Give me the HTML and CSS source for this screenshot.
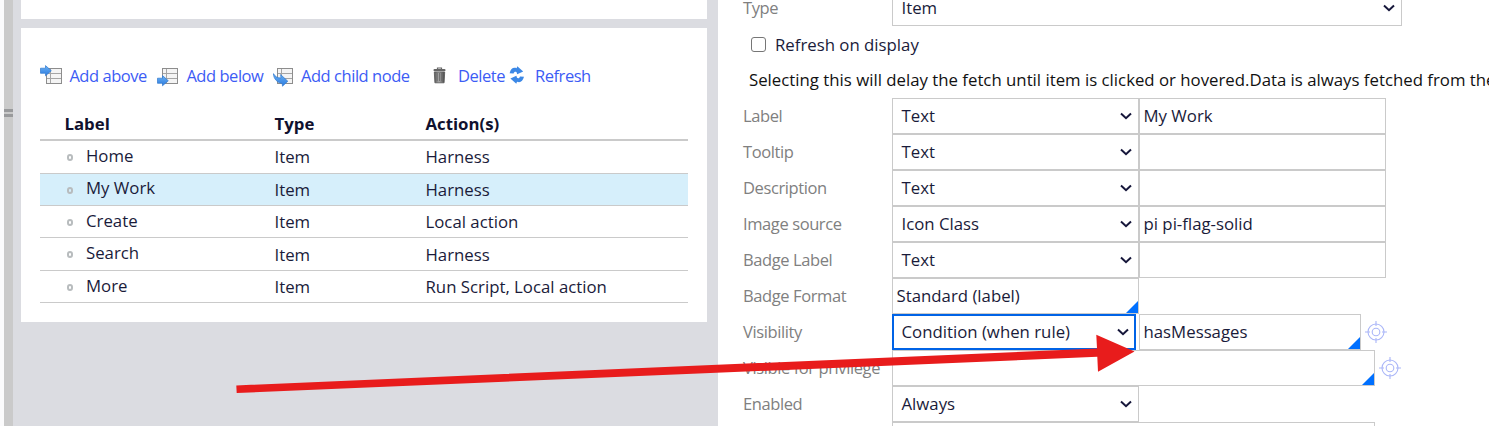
FILE: index.html
```
<!DOCTYPE html>
<html lang="en">
<head>
    <meta charset="UTF-8">
    <meta name="viewport" content="width=device-width, initial-scale=1.0">
    <title>Navigation rule</title>
    <link rel="stylesheet" href="styles.css">
</head>
<body>
    <!-- shared icon shapes -->
    <svg class="defs" width="0" height="0">
        <defs>
            <linearGradient id="blue" x1="0" y1="0" x2="0" y2="1">
                <stop offset="0" stop-color="#6ab2f4"/>
                <stop offset="1" stop-color="#2d7be0"/>
            </linearGradient>
            <linearGradient id="metal" x1="0" y1="0" x2="1" y2="0">
                <stop offset="0" stop-color="#555"/>
                <stop offset=".45" stop-color="#aaa"/>
                <stop offset="1" stop-color="#444"/>
            </linearGradient>
            <g id="grid">
                <rect x="0.5" y="0.5" width="15" height="15" fill="#f4f4f4" stroke="#8d8d8d"/>
                <path d="M1 5.5h14M1 10.5h14M4.5 1v14" fill="none" stroke="#a5a5a5"/>
            </g>
            <path id="arrow" d="M0.5 3.2h5V0.6L11.3 5.7 5.5 10.8V8.3h-5z" fill="url(#blue)" stroke="#2f78cf" stroke-width=".7"/>
            <path id="chevron" d="M1 1.5l5 4.7 5-4.7" fill="none" stroke="#15163a" stroke-width="2"/>
            <g id="target" fill="none" stroke="#aab6f8" stroke-width="1.1">
                <circle cx="11" cy="11" r="8"/>
                <circle cx="11" cy="11" r="3.8"/>
                <path d="M11 0v5M11 17v5M0 11h5M17 11h5"/>
            </g>
        </defs>
    </svg>

    <div class="page">
        <div class="splitter"><span class="grip"></span></div>

        <div class="left">
            <div class="panel panel-top"></div>
            <div class="panel panel-tree">
                <div class="toolbar">
                    <a class="tool above"><svg width="23" height="22"><use href="#grid" x="6" y="3"/><use href="#arrow" x="0" y="0"/></svg>Add above</a>
                    <a class="tool below"><svg width="23" height="22"><use href="#grid" x="5" y="3"/><use href="#arrow" x="0" y="10"/></svg>Add below</a>
                    <a class="tool child"><svg width="23" height="22"><use href="#grid" x="4" y="3"/><path d="M0.4 8.6C2 11.5 4.5 13.2 8 13l-.4-3.4 7.2 6.6-5.3 5-.3-2.7C4.5 18 .6 14 .4 8.6z" fill="url(#blue)" stroke="#2f78cf" stroke-width=".7"/></svg>Add child node</a>
                    <a class="tool delete"><svg width="14" height="22"><path d="M4.5 4.5v-1.500h4v1.500" fill="none" stroke="#666" stroke-width="1.2"/><rect x="0.5" y="4" width="12" height="2.2" rx="1" fill="#666"/><path d="M1.3 7h10.4l-.6 10.800H1.9z" fill="url(#metal)" stroke="#555" stroke-width=".8"/><path d="M4.2 8v8M6.5 8v8M8.8 8v8" stroke="#666" stroke-width=".8"/></svg>Delete</a>
                    <a class="tool refresh"><svg width="16" height="22"><path d="M0.6 8.2C1.8 3.600 4.2 2 7.6 3.2L8.3 1.2l5.900 5.400-6 2.600-.6-2C6.3 6.4 5 7 4.6 8.600z" fill="#3c88e6"/><path d="M15 11.8c-1.2 4.6-3.6 6.2-7 5l-.7 2-5.900-5.400 6-2.600.6 2c1.3.8 2.6.2 3-1.400z" fill="#3c88e6"/></svg>Refresh</a>
                </div>

                <table class="tree">
                    <thead>
                        <tr><th class="col-label">Label</th><th class="col-type">Type</th><th>Action(s)</th></tr>
                    </thead>
                    <tbody>
                        <tr class="tall first"><td><i class="node"></i><span>Home</span></td><td>Item</td><td>Harness</td></tr>
                        <tr class="selected"><td><i class="node"></i><span>My Work</span></td><td>Item</td><td>Harness</td></tr>
                        <tr><td><i class="node"></i><span>Create</span></td><td>Item</td><td>Local action</td></tr>
                        <tr class="tall"><td><i class="node"></i><span>Search</span></td><td>Item</td><td>Harness</td></tr>
                        <tr><td><i class="node"></i><span>More</span></td><td>Item</td><td>Run Script, Local action</td></tr>
                    </tbody>
                </table>
            </div>
        </div>

        <div class="right">
            <div class="row row-type">
                <label>Type</label>
                <div class="select wide">Item<svg width="12" height="8"><use href="#chevron"/></svg></div>
            </div>
            <div class="check"><span class="box"></span>Refresh on display</div>
            <div class="hint">Selecting this will delay the fetch until item is clicked or hovered.Data is always fetched from the</div>

            <div class="row">
                <label>Label</label>
                <div class="select">Text<svg width="12" height="8"><use href="#chevron"/></svg></div>
                <div class="input">My Work</div>
            </div>
            <div class="row">
                <label>Tooltip</label>
                <div class="select">Text<svg width="12" height="8"><use href="#chevron"/></svg></div>
                <div class="input"></div>
            </div>
            <div class="row">
                <label>Description</label>
                <div class="select">Text<svg width="12" height="8"><use href="#chevron"/></svg></div>
                <div class="input"></div>
            </div>
            <div class="row">
                <label>Image source</label>
                <div class="select">Icon Class<svg width="12" height="8"><use href="#chevron"/></svg></div>
                <div class="input">pi pi-flag-solid</div>
            </div>
            <div class="row">
                <label>Badge Label</label>
                <div class="select">Text<svg width="12" height="8"><use href="#chevron"/></svg></div>
                <div class="input"></div>
            </div>
            <div class="row">
                <label>Badge Format</label>
                <div class="input smart">Standard (label)</div>
            </div>
            <div class="row">
                <label>Visibility</label>
                <div class="select focused">Condition (when rule)<svg width="12" height="8"><use href="#chevron"/></svg></div>
                <div class="input smart rule">hasMessages</div>
                <svg class="open" width="22" height="22"><use href="#target"/></svg>
            </div>
            <div class="row">
                <label>Visible for privilege</label>
                <div class="input smart privilege"></div>
                <svg class="open" width="22" height="22"><use href="#target"/></svg>
            </div>
            <div class="row">
                <label>Enabled</label>
                <div class="select">Always<svg width="12" height="8"><use href="#chevron"/></svg></div>
            </div>
            <div class="row">
                <label></label>
                <div class="input privilege"></div>
            </div>
        </div>
    </div>

    <!-- callout arrow over the form -->
    <svg class="callout" width="1489" height="426">
        <path d="M236.3 385.4L1097 348.6 1096.3 334.7 1134.5 351.5 1098 371.8 1097.3 356.8 236.7 393z" fill="#e81c1c"/>
    </svg>
</body>
</html>
```
FILE: styles.css
```
* { box-sizing: border-box; }
body { margin: 0; width: 1489px; height: 426px; overflow: hidden; position: relative; background: #fff; color: #1a1b3a; font: 16.8px/22px "Open Sans", sans-serif; }
.defs { position: absolute; }
.page { display: flex; height: 426px; }

/* splitter */
.splitter { width: 13px; flex: none; background: #cacaca; border-left: 4px solid #fbfbfc; padding-top: 109px; }
.grip { display: block; height: 8px; border: solid #999a9c; border-width: 3px 0; }

/* left side */
.left { width: 705px; flex: none; background: #dbdce1; padding-left: 8px; }
.panel { width: 686px; background: #fff; }
.panel-top { height: 19px; margin-bottom: 9px; }
.panel-tree { height: 294px; padding: 37px 19px 0; }

.toolbar { display: flex; height: 22px; color: #3c5cf5; font-size: 16.5px; letter-spacing: -.46px; }
.tool { display: flex; white-space: nowrap; flex: none; }
.tool svg { flex: none; }
.above { width: 117px; }
.above svg, .below svg, .child svg { margin-right: 6.4px; }
.below { width: 116px; }
.child { width: 160px; }
.child svg { margin-right: 5px; }
.delete { width: 76px; }
.delete svg { margin-right: 11px; }
.refresh svg { margin-right: 10px; }

.tree { width: 648px; margin-top: 24px; border-collapse: separate; border-spacing: 0; table-layout: fixed; }
.tree th { height: 30px; padding: 0 0 2px .5px; text-align: left; font-weight: 700; color: #10112e; border-bottom: 2px solid #cacaca; }
.tree .col-label { width: 234px; padding-left: 24.5px; }
.tree .col-type { width: 151px; }
.tree td { height: 32px; padding: 1px 0 0 .5px; border-bottom: 1px solid #cacaca; line-height: 22px; }
.tree .tall td { height: 33px; }
.tree .first td { padding-bottom: 2px; }
.tree .selected td { background: #d6effb; }
.tree td:first-child { padding: 0 0 2px 27px; }
.tree .selected td:first-child { padding-bottom: 4px; }
.node { display: inline-block; width: 6px; height: 7px; margin-right: 13px; border: 2px solid #b8bcbe; border-radius: 3px; vertical-align: 1px; }
.selected .node { vertical-align: 0; }

/* right side */
.right { flex: 1; min-width: 0; overflow: hidden; padding-left: 25px; }
.row { display: flex; height: 36px; align-items: center; }
.row-type { margin-top: -10px; }
.row label { width: 149px; flex: none; color: #808080; font-size: 16.5px; letter-spacing: -.4px; white-space: nowrap; }
.select, .input { width: 247px; height: 36px; flex: none; border: 1px solid #cacaca; padding: 6px 3.5px; white-space: nowrap; position: relative; }
.select { display: flex; justify-content: space-between; align-items: center; padding: 0 6px 0 8.5px; }
.select.focused { width: 244px; border: 2px solid #0063e6; padding: 0 5px 0 7.5px; margin-right: 3px; }
.input.rule { width: 222px; }
.select.wide { width: 510px; }
.input.privilege { width: 483px; }
.smart::after { content: ""; position: absolute; right: 0; bottom: 0; border: solid transparent; border-width: 12px 0 0 12px; border-bottom: 12px solid #0070ff; border-top: 0; }
.open { margin: -1px 0 0 4px; flex: none; }

.check { display: flex; align-items: center; height: 38px; padding-left: 8px; }
.box { width: 15px; height: 15px; margin: -1px 9px 0 0; border: 1px solid #767676; border-radius: 3px; }
.hint { height: 34px; padding: 5px 0 0 6px; color: #111; white-space: nowrap; }

.callout { position: absolute; left: 0; top: 0; pointer-events: none; }
```
